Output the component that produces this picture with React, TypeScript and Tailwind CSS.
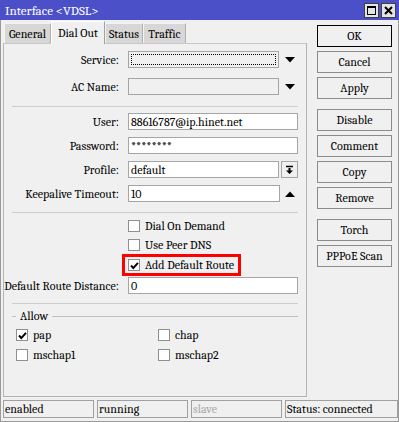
import type { ReactNode } from "react";

function DownTri() {
  return (
    <svg width="10" height="6" viewBox="0 0 10 6" className="shrink-0">
      <path d="M0 0h10L5 5.5z" fill="#000" />
    </svg>
  );
}

function UpTri() {
  return (
    <svg width="10" height="6" viewBox="0 0 10 6" className="shrink-0">
      <path d="M0 6h10L5 0.5z" fill="#000" />
    </svg>
  );
}

function Field({
  w,
  value,
  empty,
  focus,
}: {
  w: string;
  value?: string;
  empty?: boolean;
  focus?: boolean;
}) {
  return (
    <div
      className={`flex h-[17px] items-center border border-[#a5a5a5] px-[2px] ${w} ${
        empty ? "bg-[#f0f0f0]" : "bg-white"
      }`}
    >
      {focus ? (
        <div className="h-[11px] w-full border border-dotted border-black" />
      ) : (
        <span className="whitespace-nowrap">{value}</span>
      )}
    </div>
  );
}

function Row({ label, children, mt }: { label: string; children: ReactNode; mt: string }) {
  return (
    <div className={`flex items-center ${mt}`}>
      <div className="w-[116px] shrink-0 whitespace-nowrap pr-px text-right">{label}</div>
      <div className="ml-[8px] flex items-center">{children}</div>
    </div>
  );
}

function Check({ checked }: { checked?: boolean }) {
  return (
    <span className="flex h-[12px] w-[12px] shrink-0 items-center justify-center border border-[#8f8f8f] bg-white">
      {checked ? (
        <svg width="9" height="9" viewBox="0 0 9 9">
          <path d="M1 4.5 L3.3 7 L8 1.8" stroke="#000" strokeWidth="1.9" fill="none" />
        </svg>
      ) : null}
    </span>
  );
}

function Sep({ mt }: { mt: string }) {
  return <div className={`mx-[8px] h-px bg-[#cdcdcd] ${mt}`} />;
}

function Btn({ label, primary, mt }: { label: string; primary?: boolean; mt?: string }) {
  return (
    <div
      className={`flex h-[22px] w-[75px] items-center justify-center border bg-[#f0f0f0] ${
        primary ? "border-black" : "border-[#8c8c8c]"
      } ${mt ?? "mt-[4px]"}`}
    >
      {label}
    </div>
  );
}

function Tab({ label, w, active }: { label: string; w: string; active?: boolean }) {
  return active ? (
    <div
      className={`relative z-10 -mb-px flex h-[23px] items-center justify-center border border-b-0 border-l-white border-r-[#a0a0a0] border-t-white bg-[#f0f0f0] ${w}`}
    >
      {label}
    </div>
  ) : (
    <div
      className={`flex h-[20px] items-center justify-center border border-b-0 border-[#f4f4f4] border-r-[#b0b0b0] bg-[#d7d7d7] ${w}`}
    >
      {label}
    </div>
  );
}

function Cell({ text, w, dim }: { text: string; w: string; dim?: boolean }) {
  return (
    <div
      className={`flex h-[18px] items-center border border-[#a0a0a0] px-[1px] ${w} ${
        dim ? "text-[#a8a8a8]" : ""
      }`}
    >
      {text}
    </div>
  );
}

export default function App() {
  return (
    <div className="flex h-[422px] w-[399px] flex-col border-x border-b border-[#9a9a9a] bg-[#f0f0f0] font-serif text-[12px] leading-none text-black">
      {/* title bar */}
      <div className="-mx-px flex h-[20px] shrink-0 items-center bg-[#4b4fc8] pl-[5px] pr-[3px] text-white">
        <span className="text-[13px]">Interface &lt;VDSL&gt;</span>
        <div className="ml-auto flex gap-[2px]">
          <div className="flex h-[15px] w-[15px] items-center justify-center border border-[#404040] bg-[#e4e4e4]">
            <div className="h-[9px] w-[9px] border border-t-2 border-black" />
          </div>
          <div className="flex h-[15px] w-[15px] items-center justify-center border border-[#404040] bg-[#e4e4e4]">
            <svg width="9" height="9" viewBox="0 0 9 9">
              <path d="M1 1L8 8M8 1L1 8" stroke="#000" strokeWidth="2" />
            </svg>
          </div>
        </div>
      </div>

      <div className="flex pl-[2px]">
        {/* left: tabs + panel */}
        <div className="flex w-[304px] flex-col">
          <div className="flex h-[23px] items-end pl-[1px]">
            <Tab label="General" w="w-[47px]" />
            <Tab label="Dial Out" w="w-[54px]" active />
            <Tab label="Status" w="w-[38px]" />
            <Tab label="Traffic" w="w-[43px]" />
          </div>
          <div className="h-[354px] border border-[#b4b4b4] border-t-[#c8c8c8]">
            <Row label="Service:" mt="mt-[7px]">
              <Field w="w-[151px]" empty focus />
              <span className="ml-[6px]">
                <DownTri />
              </span>
            </Row>
            <Row label="AC Name:" mt="mt-[10px]">
              <Field w="w-[151px]" empty />
              <span className="ml-[6px]">
                <DownTri />
              </span>
            </Row>
            <Sep mt="mt-[11px]" />
            <Row label="User:" mt="mt-[6px]">
              <Field w="w-[170px]" value="88616787@ip.hinet.net" />
            </Row>
            <Row label="Password:" mt="mt-[7px]">
              <Field w="w-[170px]" value="********" />
            </Row>
            <Row label="Profile:" mt="mt-[7px]">
              <Field w="w-[151px]" value="default" />
              <div className="ml-[2px] flex h-[17px] w-[17px] items-center justify-center border border-[#a5a5a5] bg-[#f0f0f0]">
                <svg width="9" height="10" viewBox="0 0 9 10">
                  <path d="M1 1.5h7" stroke="#000" strokeWidth="1.5" />
                  <path d="M3.5 3h2v2.5h2.5L4.5 9 1 5.5h2.5z" fill="#000" />
                </svg>
              </div>
            </Row>
            <Row label="Keepalive Timeout:" mt="mt-[7px]">
              <Field w="w-[152px]" value="10" />
              <span className="ml-[5px]">
                <UpTri />
              </span>
            </Row>
            <Sep mt="mt-[10px]" />
            <div className="mt-[3px] flex flex-col pl-[124px]">
              <div className="flex h-[19px] items-center gap-[5px]">
                <Check />
                <span>Dial On Demand</span>
              </div>
              <div className="flex h-[19px] items-center gap-[5px]">
                <Check />
                <span>Use Peer DNS</span>
              </div>
              <div className="flex h-[22px] items-center">
                <span className="-ml-[6px] flex h-[22px] items-center gap-[5px] border-[3px] border-[#ff0000] pl-[3px] pr-[4px]">
                  <Check checked />
                  <span>Add Default Route</span>
                </span>
              </div>
            </div>
            <Row label="Default Route Distance:" mt="mt-px">
              <Field w="w-[170px]" value="0" />
            </Row>
            <Sep mt="mt-[9px]" />
            <div className="mx-[8px] mt-[5px] flex h-[14px] items-center">
              <div className="h-px w-[4px] bg-[#c0c0c0]" />
              <span className="px-[4px]">Allow</span>
              <div className="h-px flex-1 bg-[#c0c0c0]" />
            </div>
            <div className="mt-[2px] grid grid-cols-[142px_1fr] pl-[12px]">
              <div className="flex h-[20px] items-center gap-[5px]">
                <Check checked />
                <span>pap</span>
              </div>
              <div className="flex h-[20px] items-center gap-[5px]">
                <Check />
                <span>chap</span>
              </div>
              <div className="flex h-[20px] items-center gap-[5px]">
                <Check />
                <span>mschap1</span>
              </div>
              <div className="flex h-[20px] items-center gap-[5px]">
                <Check />
                <span>mschap2</span>
              </div>
            </div>
          </div>
        </div>

        {/* right: buttons */}
        <div className="ml-[10px] flex flex-col">
          <Btn label="OK" primary mt="mt-[5px]" />
          <Btn label="Cancel" />
          <Btn label="Apply" />
          <Btn label="Disable" mt="mt-[10px]" />
          <Btn label="Comment" />
          <Btn label="Copy" />
          <Btn label="Remove" />
          <Btn label="Torch" mt="mt-[10px]" />
          <Btn label="PPPoE Scan" />
        </div>
      </div>

      {/* status bar */}
      <div className="mt-[3px] flex gap-[3px] pl-[2px]">
        <Cell text="enabled" w="w-[91px]" />
        <Cell text="running" w="w-[91px]" />
        <Cell text="slave" w="w-[91px]" dim />
        <Cell text="Status: connected" w="w-[113px]" />
      </div>
    </div>
  );
}
